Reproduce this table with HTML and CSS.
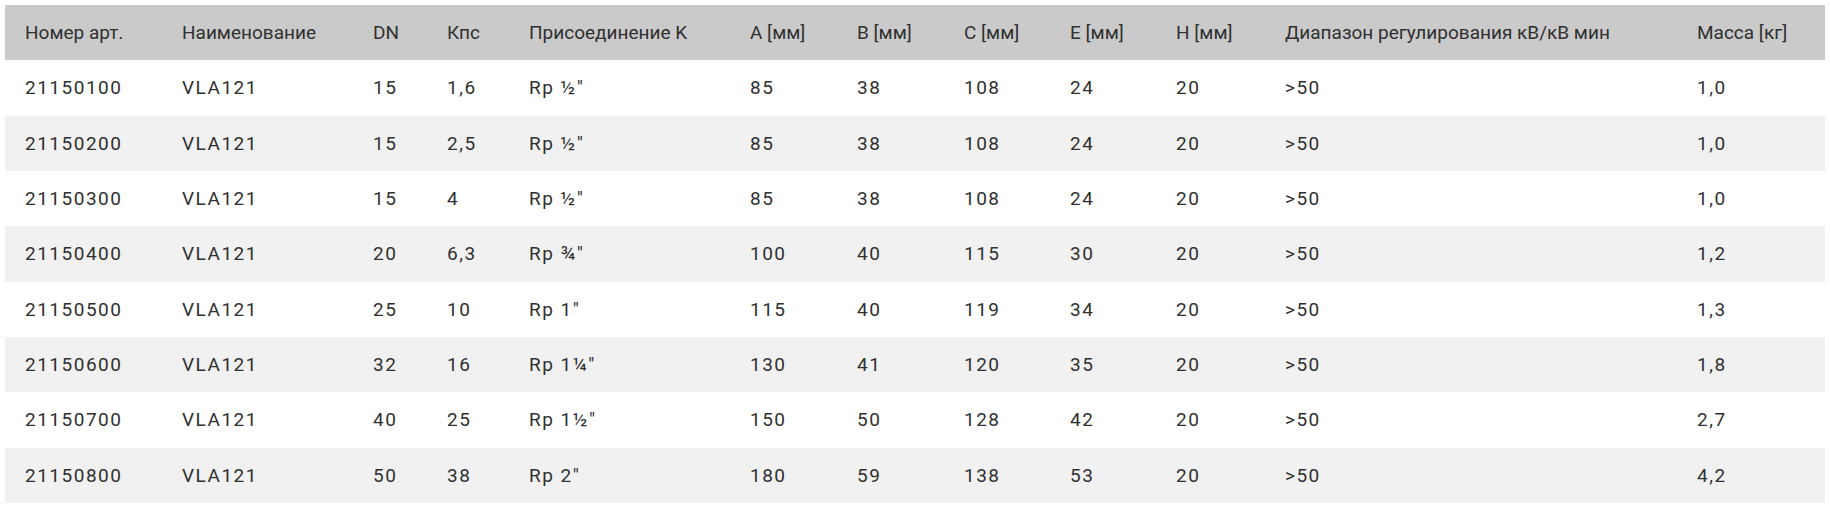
FILE: index.html
```html
<!DOCTYPE html>
<html lang="ru">
<head>
<meta charset="utf-8">
<title>VLA121</title>
<link rel="stylesheet" href="styles.css">
</head>
<body>
<table class="spec">
  <colgroup>
    <col class="c-art"><col class="c-name"><col class="c-dn"><col class="c-kvs"><col class="c-conn">
    <col class="c-a"><col class="c-b"><col class="c-c"><col class="c-e"><col class="c-h">
    <col class="c-range"><col class="c-mass">
  </colgroup>
  <thead>
    <tr><th>Номер арт.</th><th>Наименование</th><th>DN</th><th>Кпс</th><th>Присоединение K</th><th>A [мм]</th><th>B [мм]</th><th>C [мм]</th><th>E [мм]</th><th>H [мм]</th><th>Диапазон регулирования кВ/кВ мин</th><th>Масса [кг]</th></tr>
  </thead>
  <tbody>
    <tr><td>21150100</td><td>VLA121</td><td>15</td><td>1,6</td><td>Rp ½"</td><td>85</td><td>38</td><td>108</td><td>24</td><td>20</td><td>&gt;50</td><td>1,0</td></tr>
    <tr><td>21150200</td><td>VLA121</td><td>15</td><td>2,5</td><td>Rp ½"</td><td>85</td><td>38</td><td>108</td><td>24</td><td>20</td><td>&gt;50</td><td>1,0</td></tr>
    <tr><td>21150300</td><td>VLA121</td><td>15</td><td>4</td><td>Rp ½"</td><td>85</td><td>38</td><td>108</td><td>24</td><td>20</td><td>&gt;50</td><td>1,0</td></tr>
    <tr><td>21150400</td><td>VLA121</td><td>20</td><td>6,3</td><td>Rp ¾"</td><td>100</td><td>40</td><td>115</td><td>30</td><td>20</td><td>&gt;50</td><td>1,2</td></tr>
    <tr><td>21150500</td><td>VLA121</td><td>25</td><td>10</td><td>Rp 1"</td><td>115</td><td>40</td><td>119</td><td>34</td><td>20</td><td>&gt;50</td><td>1,3</td></tr>
    <tr><td>21150600</td><td>VLA121</td><td>32</td><td>16</td><td>Rp 1¼"</td><td>130</td><td>41</td><td>120</td><td>35</td><td>20</td><td>&gt;50</td><td>1,8</td></tr>
    <tr><td>21150700</td><td>VLA121</td><td>40</td><td>25</td><td>Rp 1½"</td><td>150</td><td>50</td><td>128</td><td>42</td><td>20</td><td>&gt;50</td><td>2,7</td></tr>
    <tr><td>21150800</td><td>VLA121</td><td>50</td><td>38</td><td>Rp 2"</td><td>180</td><td>59</td><td>138</td><td>53</td><td>20</td><td>&gt;50</td><td>4,2</td></tr>
  </tbody>
</table>
</body>
</html>
```

FILE: styles.css
```css
html, body {
  margin: 0;
  padding: 0;
  background: #ffffff;
}
body {
  padding: 5px;
  font-family: Roboto, "Liberation Sans", sans-serif;
  color: #303030;
}
.spec {
  width: 1820px;
  border-collapse: collapse;
  table-layout: fixed;
  font-size: 19px;
}
.c-art { width: 157px; }
.c-name { width: 191px; }
.c-dn { width: 74px; }
.c-kvs { width: 82px; }
.c-conn { width: 221px; }
.c-a { width: 107px; }
.c-b { width: 107px; }
.c-c { width: 106px; }
.c-e { width: 106px; }
.c-h { width: 109px; }
.c-range { width: 412px; }
.c-mass { width: 148px; }
.spec th, .spec td {
  height: 55.33px;
  padding: 0 0 0 20px;
  text-align: left;
  vertical-align: middle;
  white-space: nowrap;
  font-weight: 400;
  box-sizing: border-box;
}
.spec thead tr { background: #cacaca; }
.spec td { letter-spacing: 1.5px; }
.spec tbody tr:nth-child(even) { background: #f1f1f1; }
.spec tbody tr:nth-child(odd) { background: #ffffff; }
```
